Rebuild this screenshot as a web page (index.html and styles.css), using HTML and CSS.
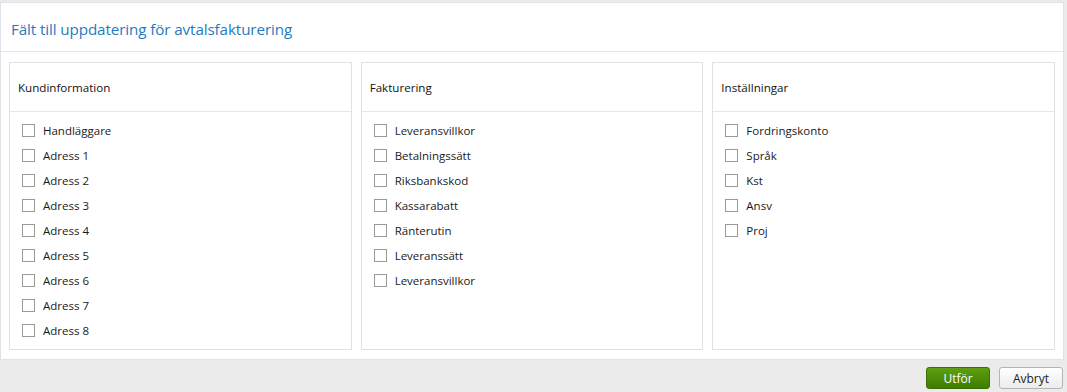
FILE: index.html
```html
<!DOCTYPE html>
<html lang="sv">
<head>
    <meta charset="UTF-8">
    <title>Fält till uppdatering för avtalsfakturering</title>
    <link rel="stylesheet" href="styles.css">
</head>
<body>

<!-- Dialog -->
<div class="dialog">
    <div class="dialog-header">
        <h1>Fält till uppdatering för avtalsfakturering</h1>
    </div>
    <div class="dialog-body">
        <div class="group">
            <div class="group-title">Kundinformation</div>
            <ul class="field-list">
                <li><label><span class="check"></span>Handläggare</label></li>
                <li><label><span class="check"></span>Adress 1</label></li>
                <li><label><span class="check"></span>Adress 2</label></li>
                <li><label><span class="check"></span>Adress 3</label></li>
                <li><label><span class="check"></span>Adress 4</label></li>
                <li><label><span class="check"></span>Adress 5</label></li>
                <li><label><span class="check"></span>Adress 6</label></li>
                <li><label><span class="check"></span>Adress 7</label></li>
                <li><label><span class="check"></span>Adress 8</label></li>
            </ul>
        </div>
        <div class="group">
            <div class="group-title">Fakturering</div>
            <ul class="field-list">
                <li><label><span class="check"></span>Leveransvillkor</label></li>
                <li><label><span class="check"></span>Betalningssätt</label></li>
                <li><label><span class="check"></span>Riksbankskod</label></li>
                <li><label><span class="check"></span>Kassarabatt</label></li>
                <li><label><span class="check"></span>Ränterutin</label></li>
                <li><label><span class="check"></span>Leveranssätt</label></li>
                <li><label><span class="check"></span>Leveransvillkor</label></li>
            </ul>
        </div>
        <div class="group">
            <div class="group-title">Inställningar</div>
            <ul class="field-list">
                <li><label><span class="check"></span>Fordringskonto</label></li>
                <li><label><span class="check"></span>Språk</label></li>
                <li><label><span class="check"></span>Kst</label></li>
                <li><label><span class="check"></span>Ansv</label></li>
                <li><label><span class="check"></span>Proj</label></li>
            </ul>
        </div>
    </div>
</div>

<!-- Knappar -->
<div class="dialog-footer">
    <button class="btn btn-primary">Utför</button>
    <button class="btn">Avbryt</button>
</div>

</body>
</html>
```

FILE: styles.css
```css
/* Globalt */
body {
    margin: 0;
    font-family: 'Open Sans', 'Noto Sans', sans-serif;
    background: #ebebeb;
    color: #222;
}

/* Dialogruta */
.dialog {
    margin: 2px 3px 0 0;
    background: #ffffff;
    border: 1px solid #dde3e8;
}
.dialog-header {
    height: 48px;
    display: flex;
    align-items: center;
    padding-left: 10px;
    border-bottom: 1px solid #e3e7ea;
}
.dialog-header h1 {
    margin: 3px 0 0;
    font-size: 15.2px;
    font-weight: normal;
    color: #1f7bbf;
    letter-spacing: -0.1px;
}
.dialog-body {
    display: grid;
    grid-template-columns: 1fr 1fr 1fr;
    gap: 9px;
    padding: 10px 8px 9px;
}

/* Grupper */
.group {
    border: 1px solid #dce3e8;
}
.group-title {
    height: 48px;
    display: flex;
    align-items: center;
    padding-left: 8px;
    font-size: 11.6px;
    color: #111;
    border-bottom: 1px solid #e3e7ea;
}
.field-list {
    list-style: none;
    margin: 0;
    padding: 6px 0 6px 12px;
}
.field-list li {
    height: 25px;
    display: flex;
    align-items: center;
}
.field-list label {
    display: flex;
    align-items: center;
    font-size: 11.5px;
    color: #1a1a1a;
    cursor: pointer;
}
.check {
    width: 11px;
    height: 11px;
    border: 1px solid #9a9a9a;
    background: #fff;
    margin-right: 8px;
}

/* Knappar */
.dialog-footer {
    display: flex;
    justify-content: flex-end;
    gap: 9px;
    padding: 7px 4px 0 0;
}
.btn {
    width: 64px;
    height: 22px;
    padding: 0;
    font-family: inherit;
    font-size: 12px;
    color: #222;
    background: linear-gradient(#ffffff, #ececec);
    border: 1px solid #b4b4b4;
    border-radius: 3px;
}
.btn-primary {
    color: #ffffff;
    background: linear-gradient(#5e9f12, #3f7c00);
    border-color: #3b6e05;
}
```
